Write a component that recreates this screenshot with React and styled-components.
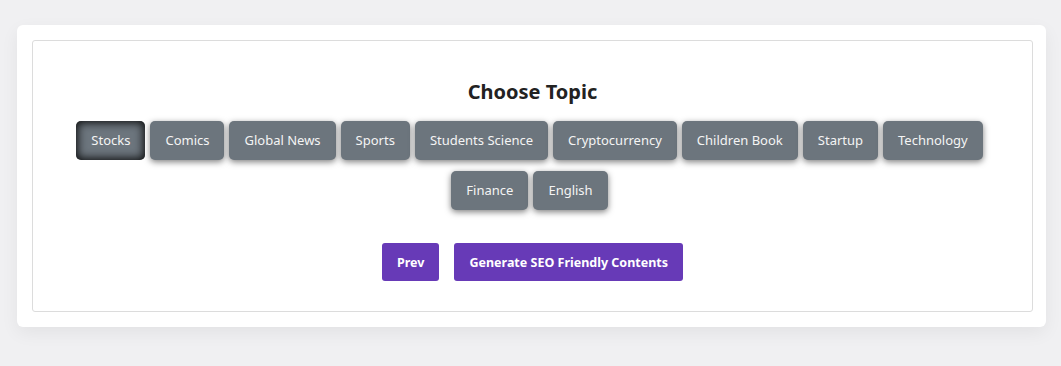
import React, { useState } from "react";
import styled, { createGlobalStyle } from "styled-components";

const GlobalStyle = createGlobalStyle`
  body {
    margin: 0;
    background: #f0f0f2;
    font-family: "Noto Sans", "Liberation Sans", sans-serif;
  }
`;

const Page = styled.div`
  padding: 25px 15px 40px 17px;
`;

const Card = styled.div`
  background: #ffffff;
  border-radius: 6px;
  box-shadow: 0 6px 18px rgba(0, 0, 0, 0.06);
  padding: 15px 13px 15px 15px;
`;

const Panel = styled.div`
  border: 1px solid #dcdcdc;
  border-radius: 3px;
  padding: 38px 16px 30px;
  display: flex;
  flex-direction: column;
  align-items: center;
`;

const Title = styled.h2`
  margin: 0 0 16px;
  font-size: 20px;
  font-weight: 700;
  color: #222;
  line-height: 26px;
`;

const TopicList = styled.div`
  display: flex;
  flex-wrap: wrap;
  justify-content: center;
  gap: 11px 5px;
  padding-right: 6px;
`;

const Topic = styled.button`
  font-family: inherit;
  font-size: 13px;
  line-height: 19px;
  color: #f4f4f4;
  background: #6c757d;
  border: none;
  border-radius: 5px;
  padding: 10px 15px;
  cursor: pointer;
  box-shadow: ${(p) =>
    p.$active
      ? "inset 0 0 9px 2px rgba(0, 0, 0, 0.85)"
      : "0 2px 6px rgba(0, 0, 0, 0.5)"};
`;

const Actions = styled.div`
  display: flex;
  gap: 15px;
  margin-top: 33px;
`;

const ActionButton = styled.button`
  font-family: inherit;
  font-size: 12.5px;
  font-weight: 700;
  color: #fff;
  background: #673ab7;
  border: none;
  border-radius: 3px;
  height: 38px;
  padding: 0 15px;
  cursor: pointer;
`;

const topics = [
  "Stocks",
  "Comics",
  "Global News",
  "Sports",
  "Students Science",
  "Cryptocurrency",
  "Children Book",
  "Startup",
  "Technology",
  "Finance",
  "English",
];

export default function App() {
  const [selected, setSelected] = useState("Stocks");
  return (
    <>
      <GlobalStyle />
      <Page>
        <Card>
          <Panel>
            <Title>Choose Topic</Title>
            <TopicList>
              {topics.map((t) => (
                <Topic
                  key={t}
                  $active={t === selected}
                  onClick={() => setSelected(t)}
                >
                  {t}
                </Topic>
              ))}
            </TopicList>
            <Actions>
              <ActionButton>Prev</ActionButton>
              <ActionButton>Generate SEO Friendly Contents</ActionButton>
            </Actions>
          </Panel>
        </Card>
      </Page>
    </>
  );
}
